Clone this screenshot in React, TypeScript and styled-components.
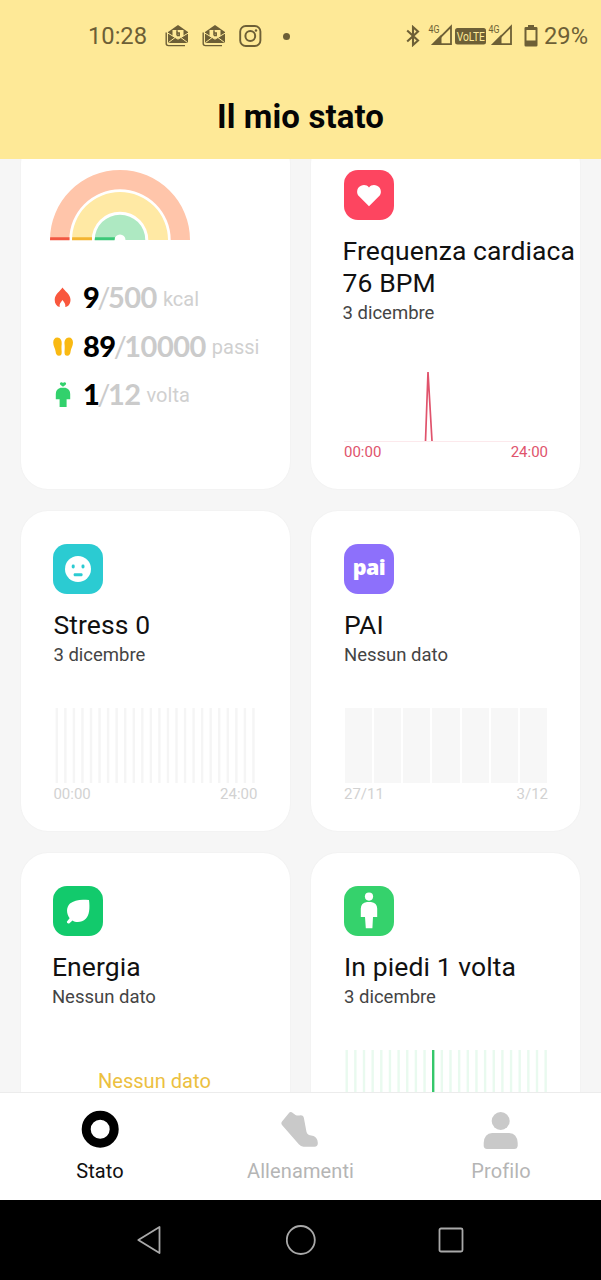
import React from "react";
import styled, { createGlobalStyle } from "styled-components";

const GlobalStyle = createGlobalStyle`
  * { box-sizing: border-box; }
  body { margin: 0; background: #000; font-family: Roboto, "Liberation Sans", sans-serif; }
  svg { display: block; flex: none; }
`;

const INK = "#6d5f36";

const Phone = styled.div`
  width: 601px;
  height: 1280px;
  display: flex;
  flex-direction: column;
  background: #f6f6f6;
  overflow: hidden;
`;

const Header = styled.header`
  flex: none;
  height: 159px;
  background: #fee997;
`;

const StatusBar = styled.div`
  display: flex;
  justify-content: space-between;
  align-items: center;
  height: 72px;
  padding: 0 13px 0 88px;
  color: ${INK};
`;

const StatusGroup = styled.div<{ $gap: number }>`
  display: flex;
  align-items: center;
  gap: ${(p) => p.$gap}px;
`;

const StatusText = styled.span`
  font-size: 23.7px;
  line-height: 28px;
  white-space: nowrap;
`;

const Dot = styled.span`
  width: 7px;
  height: 7px;
  margin-left: 8px;
  border-radius: 50%;
  background: ${INK};
`;

const PageTitle = styled.h1`
  margin: 0;
  height: 86px;
  line-height: 89px;
  text-align: center;
  font-size: 33px;
  font-weight: 700;
  letter-spacing: 0.1px;
  color: #050505;
`;

const Scroll = styled.main`
  flex: 1;
  min-height: 0;
  overflow: hidden;
`;

const Grid = styled.div`
  display: grid;
  grid-template-columns: 269px 269px;
  grid-template-rows: 352px 320px 320px;
  gap: 22px 21px;
  margin: -22px 0 0 21px;
`;

const Card = styled.section<{ $inset?: number }>`
  display: flex;
  flex-direction: column;
  padding: 33px 0 0 ${(p) => p.$inset ?? 33}px;
  border-radius: 27px;
  background: #fff;
  box-shadow: 0 0 2px rgba(0, 0, 0, 0.05);
`;

const Stats = styled.div`
  display: flex;
  flex-direction: column;
  margin-top: 32px;
`;

const StatRow = styled.div`
  display: flex;
  align-items: center;
  height: 48.4px;
  white-space: nowrap;
`;

const StatIcon = styled.span`
  width: 33px;
  display: flex;
  padding-left: 1px;
  padding-top: 2px;
`;

const StatNumber = styled.span`
  font-family: Lato, Roboto, sans-serif;
  font-size: 29px;
  line-height: 34px;
  font-weight: 700;
  color: #cbcbcb;
  letter-spacing: -0.5px;
  b { color: #000; }
  i { font-style: normal; font-weight: 400; margin: 0 -2px; }
`;

const StatUnit = styled.span`
  margin: 3px 0 0 6px;
  font-size: 20px;
  line-height: 24px;
  color: #d0d0d0;
`;

const Tile = styled.div<{ $color: string }>`
  width: 50px;
  height: 50px;
  flex: none;
  display: flex;
  align-items: center;
  justify-content: center;
  border-radius: 14px;
  background: ${(p) => p.$color};
`;

const Logo = styled.span`
  margin-top: -5px;
  color: #fff;
  font: 800 21.5px/28px "Open Sans", sans-serif;
  letter-spacing: -0.6px;
`;

const CardTitle = styled.h2<{ $shift?: number }>`
  margin: 15px 0 0 ${(p) => p.$shift ?? 0}px;
  font-size: 26.5px;
  line-height: 32px;
  font-weight: 400;
  letter-spacing: 0.1px;
  color: #111;
  white-space: nowrap;
`;

const CardDate = styled.p<{ $shift?: number }>`
  margin: 3px 0 0 ${(p) => p.$shift ?? 0}px;
  font-size: 18.5px;
  line-height: 22px;
  color: #444;
`;

const Chart = styled.div`
  width: 204px;
  height: 75px;
  margin-top: 42px;
`;

const Axis = styled.div<{ $color: string }>`
  width: 204px;
  display: flex;
  justify-content: space-between;
  margin-top: 2px;
  font-size: 15px;
  line-height: 18px;
  color: ${(p) => p.$color};
`;

const EmptyNote = styled.p`
  width: 202px;
  margin: 61px 0 0;
  text-align: center;
  font-size: 20.1px;
  line-height: 24px;
  color: #ecc03f;
`;

const TabBar = styled.nav`
  flex: none;
  height: 108px;
  display: grid;
  grid-template-columns: 200px 201px 200px;
  border-top: 1px solid #ececec;
  background: #fff;
`;

const Tab = styled.div<{ $active?: boolean }>`
  display: flex;
  flex-direction: column;
  align-items: center;
  padding-top: 16px;
  gap: 10px;
  font-size: 20px;
  line-height: 24px;
  letter-spacing: 0.1px;
  color: ${(p) => (p.$active ? "#111" : "#b5b5b5")};
`;

const SystemNav = styled.div`
  flex: none;
  height: 80px;
  display: flex;
  align-items: center;
  justify-content: center;
  gap: 120px;
  background: #000;
`;

const MailIcon = () => (
  <svg width="24" height="22" viewBox="0 0 24 22">
    <path d="M1.2 7.5V18.5Q1.2 20.6 3.4 20.6H20" fill="none" stroke={INK} strokeWidth="1.4" />
    <path d="M3 7 13 0 23 7V18H3Z" fill={INK} />
    <path d="M7.5 5H18.5V11L13 14 7.5 11Z" fill="#fee997" />
    <path d="M3 8.2 13 14.2 23 8.2M3.4 17.6 10 12.6M22.6 17.6 16 12.6" fill="none" stroke="#fee997" strokeWidth="1" />
    <path d="M12 5.2V10.5M12 8H14.2V10.5H12" fill="none" stroke={INK} strokeWidth="1.5" />
  </svg>
);

const CameraIcon = () => (
  <svg width="23" height="23" viewBox="0 0 23 23" fill="none" stroke={INK}>
    <rect x="1.2" y="1" width="20.2" height="20" rx="5.6" strokeWidth="1.9" />
    <circle cx="11.3" cy="11" r="4.9" strokeWidth="2" />
    <circle cx="17" cy="5.5" r="1.2" fill={INK} stroke="none" />
  </svg>
);

const BluetoothIcon = () => (
  <svg width="14" height="22" viewBox="0 0 14 22" fill="none" stroke={INK} strokeWidth="2.1">
    <path d="M1.2 5.5 12 15.6 7 20V2L12 6.4 1.2 16.5" />
  </svg>
);

const SignalIcon = () => (
  <svg width="25" height="24" viewBox="0 0 25 24">
    <path d="M5.5 20.2 23 2.5V20.2Z" fill="none" stroke={INK} strokeWidth="1.8" />
    <path d="M3 21 13.5 10.5V21Z" fill={INK} />
    <text transform="scale(0.84 1)" x="0.6" y="9.4" fontSize="10.5" fill={INK}>4G</text>
  </svg>
);

const VolteIcon = () => (
  <svg width="31" height="17" viewBox="0 0 31 17">
    <rect width="31" height="16.5" rx="2.5" fill={INK} />
    <text transform="scale(0.76 1)" x="2.2" y="12.9" fontSize="13.5" fill="#fee997">VoLTE</text>
  </svg>
);

const BatteryIcon = () => (
  <svg width="14" height="22" viewBox="0 0 14 22">
    <path d="M4 0H10V2H12.2Q13.5 2 13.5 3.3V20.2Q13.5 21.5 12.2 21.5H1.8Q.5 21.5 .5 20.2V3.3Q.5 2 1.8 2H4Z" fill={INK} />
    <rect x="2.5" y="5" width="9" height="10.5" fill="#fee997" />
  </svg>
);

const arc = (outer: number, inner: number) =>
  `M${70 - outer} 70A${outer} ${outer} 0 0 1 ${70 + outer} 70H${70 + inner}A${inner} ${inner} 0 0 0 ${70 - inner} 70Z`;

const Rainbow = () => (
  <svg width="140" height="71" viewBox="0 0 140 71">
    <path d={arc(70, 50.7)} fill="#ffc5aa" />
    <path d={arc(48, 28.3)} fill="#ffe9a4" />
    <path d={arc(25.3, 5.5)} fill="#aee9c2" />
    <path d="M0 70.3 0.2 67.3H19.5V70.3Z" fill="#f25742" />
    <path d="M22.2 67.3H42V70.3H22Z" fill="#f3b431" />
    <path d="M45 67.3H65L64.5 70.3H44.7Z" fill="#3cc878" />
  </svg>
);

const FlameIcon = () => (
  <svg width="24" height="26" viewBox="0 0 24 26">
    <path d="M11.5 2.5C13.5 6 19.5 9 19.5 14.8 19.5 18.8 17.3 21.8 14.3 22.1 14.8 19 13.3 17.5 11.5 15 9.7 17.5 8.1 19 8.7 22.1 5.5 21.3 3.7 18.8 3.7 14.8 3.7 9 9.5 6 11.5 2.5Z" fill="#f9573d" />
  </svg>
);

const StepsIcon = () => (
  <svg width="24" height="26" viewBox="0 0 24 26" fill="#f9b912">
    <path d="M6.3 3.5C9.5 3.5 11 6.5 10.7 10 10.3 13 10.5 15 10.7 18 10.8 20.8 9.8 21.8 8 21.8 5.8 21.8 4.8 20 4.6 17.5 4.3 14.5 2.2 12 2.2 8.5 2.2 5.5 3.8 3.5 6.3 3.5Z" />
    <path d="M17.9 3.5C14.7 3.5 13.2 6.5 13.5 10 13.9 13 13.7 15 13.5 18 13.4 20.8 14.4 21.8 16.2 21.8 18.4 21.8 19.4 20 19.6 17.5 19.9 14.5 22 12 22 8.5 22 5.5 20.4 3.5 17.9 3.5Z" />
  </svg>
);

const StandIcon = () => (
  <svg width="24" height="28" viewBox="0 0 24 28" fill="#32d16c">
    <path d="M12 5.8 9.3 3.8Q8.3 2.5 9.5 1.6 11 .9 12 2 13 .9 14.5 1.6 15.7 2.5 14.7 3.8Z" />
    <path d="M9.5 6.8H14.5Q19.2 8.3 19.2 13V18.2H15.6V26H8.6V18.2H4.8V13Q4.8 8.3 9.5 6.8Z" />
  </svg>
);

const HeartIcon = () => (
  <svg width="26" height="24" viewBox="0 0 26 24">
    <path d="M13 23.2 2.8 13C-.2 9.8 1 4.2 5 2.7 8.2 1.4 11 2.2 13 4.4 15 2.2 17.8 1.4 21 2.7 25 4.2 26.2 9.8 23.2 13Z" fill="#fff" />
  </svg>
);

const FaceIcon = () => (
  <svg width="26" height="26" viewBox="0 0 26 26">
    <circle cx="13" cy="13" r="13" fill="#fff" />
    <rect x="6.7" y="8.6" width="3" height="3.8" rx="1.4" fill="#2bcbd2" />
    <rect x="16.5" y="8.6" width="3" height="3.8" rx="1.4" fill="#2bcbd2" />
    <rect x="8.7" y="17.2" width="8.8" height="3" rx="1" fill="#2bcbd2" />
  </svg>
);

const LeafIcon = () => (
  <svg width="24" height="26" viewBox="0 0 24 26">
    <path d="M23 2C24 10.5 23.4 17 19.8 20.8 16 24.5 9.8 24.8 6.5 22.4L3.2 25.5Q1 26 .8 23.8L3.6 20.3C.1 15.3.2 9.3 4 5.6 8.3 1.7 15 1.1 23 2Z" fill="#fff" />
  </svg>
);

const PersonIcon = () => (
  <svg width="18" height="38" viewBox="0 0 18 38" fill="#fff">
    <circle cx="9" cy="4.6" r="4.1" />
    <path d="M7 9.9H11Q17 10.6 17.2 16.5V25H13L12.4 36.3H5.8L5 25H.8V16.5Q1 10.6 7 9.9Z" />
  </svg>
);

const PulseChart = () => (
  <svg width="204" height="79" viewBox="0 0 204 79" fill="none">
    <path d="M0 75.5H204" stroke="#fce9ec" strokeWidth="1" />
    <path d="M81.5 75 84 6 88 75" stroke="#e0536c" strokeWidth="1.7" />
  </svg>
);

const DayBars = ({ color, first, step, active }: { color: string; first: number; step: number; active?: number }) => (
  <svg width="204" height="75" viewBox="0 0 204 75">
    {Array.from({ length: 24 }, (_, i) => (
      <rect key={i} x={first + i * step} y="0" width="2.4" height="75" fill={i === active ? "#35c76b" : color} />
    ))}
  </svg>
);

const WeekBars = styled.div`
  height: 100%;
  display: grid;
  grid-template-columns: repeat(7, 1fr);
  gap: 2px;
  padding: 0 1px;
  i { background: #f7f7f7; }
`;

const RingIcon = () => (
  <svg width="40" height="40" viewBox="0 0 40 40">
    <circle cx="20.2" cy="20.2" r="14" fill="none" stroke="#000" strokeWidth="9" />
  </svg>
);

const ShoeIcon = () => (
  <svg width="40" height="40" viewBox="2 0.5 40 40">
    <path d="M10.4 4.1Q11.3 3 12.8 3.8L16.5 6.5Q18.2 7.4 20.3 7Q22.2 6.2 23.6 7.2Q24.7 8 24.9 9.5L27.5 23.5Q28 25.8 30 26.4L34.5 27.6Q38.4 29 38.8 34.3Q39 38 35.5 38.2H24.5Q21.8 38.2 19.8 35.8L3.2 16.8Q1.5 14.8 3.2 12.8Z" fill="#c9c9c9" />
  </svg>
);

const ProfileIcon = () => (
  <svg width="40" height="40" viewBox="0.8 0 40 40" fill="#c9c9c9">
    <circle cx="20.5" cy="12" r="9" />
    <path d="M12 24H29Q37 24.3 37.5 34V36.5Q37.3 40 34 40H6.8Q3.5 39.8 3.5 36.5V34Q4 24.3 12 24Z" />
  </svg>
);

export default function App() {
  return (
    <Phone>
      <GlobalStyle />
      <Header>
        <StatusBar>
          <StatusGroup $gap={18}>
            <StatusText>10:28</StatusText>
            <StatusGroup $gap={13}>
              <MailIcon />
              <MailIcon />
              <CameraIcon />
              <Dot />
            </StatusGroup>
          </StatusGroup>
          <StatusGroup $gap={11}>
            <StatusGroup $gap={8}>
              <BluetoothIcon />
              <StatusGroup $gap={2}>
                <SignalIcon />
                <VolteIcon />
                <SignalIcon />
              </StatusGroup>
            </StatusGroup>
            <StatusGroup $gap={6}>
              <BatteryIcon />
              <StatusText>29%</StatusText>
            </StatusGroup>
          </StatusGroup>
        </StatusBar>
        <PageTitle>Il mio stato</PageTitle>
      </Header>

      <Scroll>
        <Grid>
          <Card $inset={29}>
            <Rainbow />
            <Stats>
              <StatRow>
                <StatIcon><FlameIcon /></StatIcon>
                <StatNumber><b>9</b><i>/</i>500</StatNumber>
                <StatUnit>kcal</StatUnit>
              </StatRow>
              <StatRow>
                <StatIcon><StepsIcon /></StatIcon>
                <StatNumber><b>89</b><i>/</i>10000</StatNumber>
                <StatUnit>passi</StatUnit>
              </StatRow>
              <StatRow>
                <StatIcon><StandIcon /></StatIcon>
                <StatNumber><b>1</b><i>/</i>12</StatNumber>
                <StatUnit>volta</StatUnit>
              </StatRow>
            </Stats>
          </Card>

          <Card>
            <Tile $color="#fd4560"><HeartIcon /></Tile>
            <CardTitle $shift={-1.5}>Frequenza cardiaca<br />76 BPM</CardTitle>
            <CardDate $shift={-1.5}>3 dicembre</CardDate>
            <Chart><PulseChart /></Chart>
            <Axis $color="#e0536c"><span>00:00</span><span>24:00</span></Axis>
          </Card>

          <Card $inset={32.4}>
            <Tile $color="#2bcbd2"><FaceIcon /></Tile>
            <CardTitle>Stress 0</CardTitle>
            <CardDate>3 dicembre</CardDate>
            <Chart><DayBars color="#f5f5f5" first={2.6} step={8.55} /></Chart>
            <Axis $color="#d2d2d2"><span>00:00</span><span>24:00</span></Axis>
          </Card>

          <Card>
            <Tile $color="#8d70fb"><Logo>pai</Logo></Tile>
            <CardTitle>PAI</CardTitle>
            <CardDate>Nessun dato</CardDate>
            <Chart>
              <WeekBars>{Array.from({ length: 7 }, (_, i) => <i key={i} />)}</WeekBars>
            </Chart>
            <Axis $color="#d2d2d2"><span>27/11</span><span>3/12</span></Axis>
          </Card>

          <Card $inset={32.4}>
            <Tile $color="#12ca6c"><LeafIcon /></Tile>
            <CardTitle $shift={-1.5}>Energia</CardTitle>
            <CardDate $shift={-1.5}>Nessun dato</CardDate>
            <EmptyNote>Nessun dato</EmptyNote>
          </Card>

          <Card>
            <Tile $color="#35d26c"><PersonIcon /></Tile>
            <CardTitle>In piedi 1 volta</CardTitle>
            <CardDate>3 dicembre</CardDate>
            <Chart><DayBars color="#e9faef" first={1.5} step={8.65} active={10} /></Chart>
          </Card>
        </Grid>
      </Scroll>

      <TabBar>
        <Tab $active><RingIcon />Stato</Tab>
        <Tab><ShoeIcon />Allenamenti</Tab>
        <Tab><ProfileIcon />Profilo</Tab>
      </TabBar>

      <SystemNav>
        <svg width="30" height="30" viewBox="0 0 30 30" fill="none" stroke="#a9a9a9" strokeWidth="1.8" strokeLinejoin="round">
          <path d="M2.3 15 23.5 2V28Z" />
        </svg>
        <svg width="30" height="30" viewBox="0.5 0 30 30" fill="none" stroke="#a9a9a9" strokeWidth="1.8">
          <circle cx="15.3" cy="15" r="14" />
        </svg>
        <svg width="30" height="30" viewBox="0 0 30 30" fill="none" stroke="#a9a9a9" strokeWidth="1.8">
          <rect x="3.5" y="3.5" width="23" height="23" rx="1.5" />
        </svg>
      </SystemNav>
    </Phone>
  );
}
